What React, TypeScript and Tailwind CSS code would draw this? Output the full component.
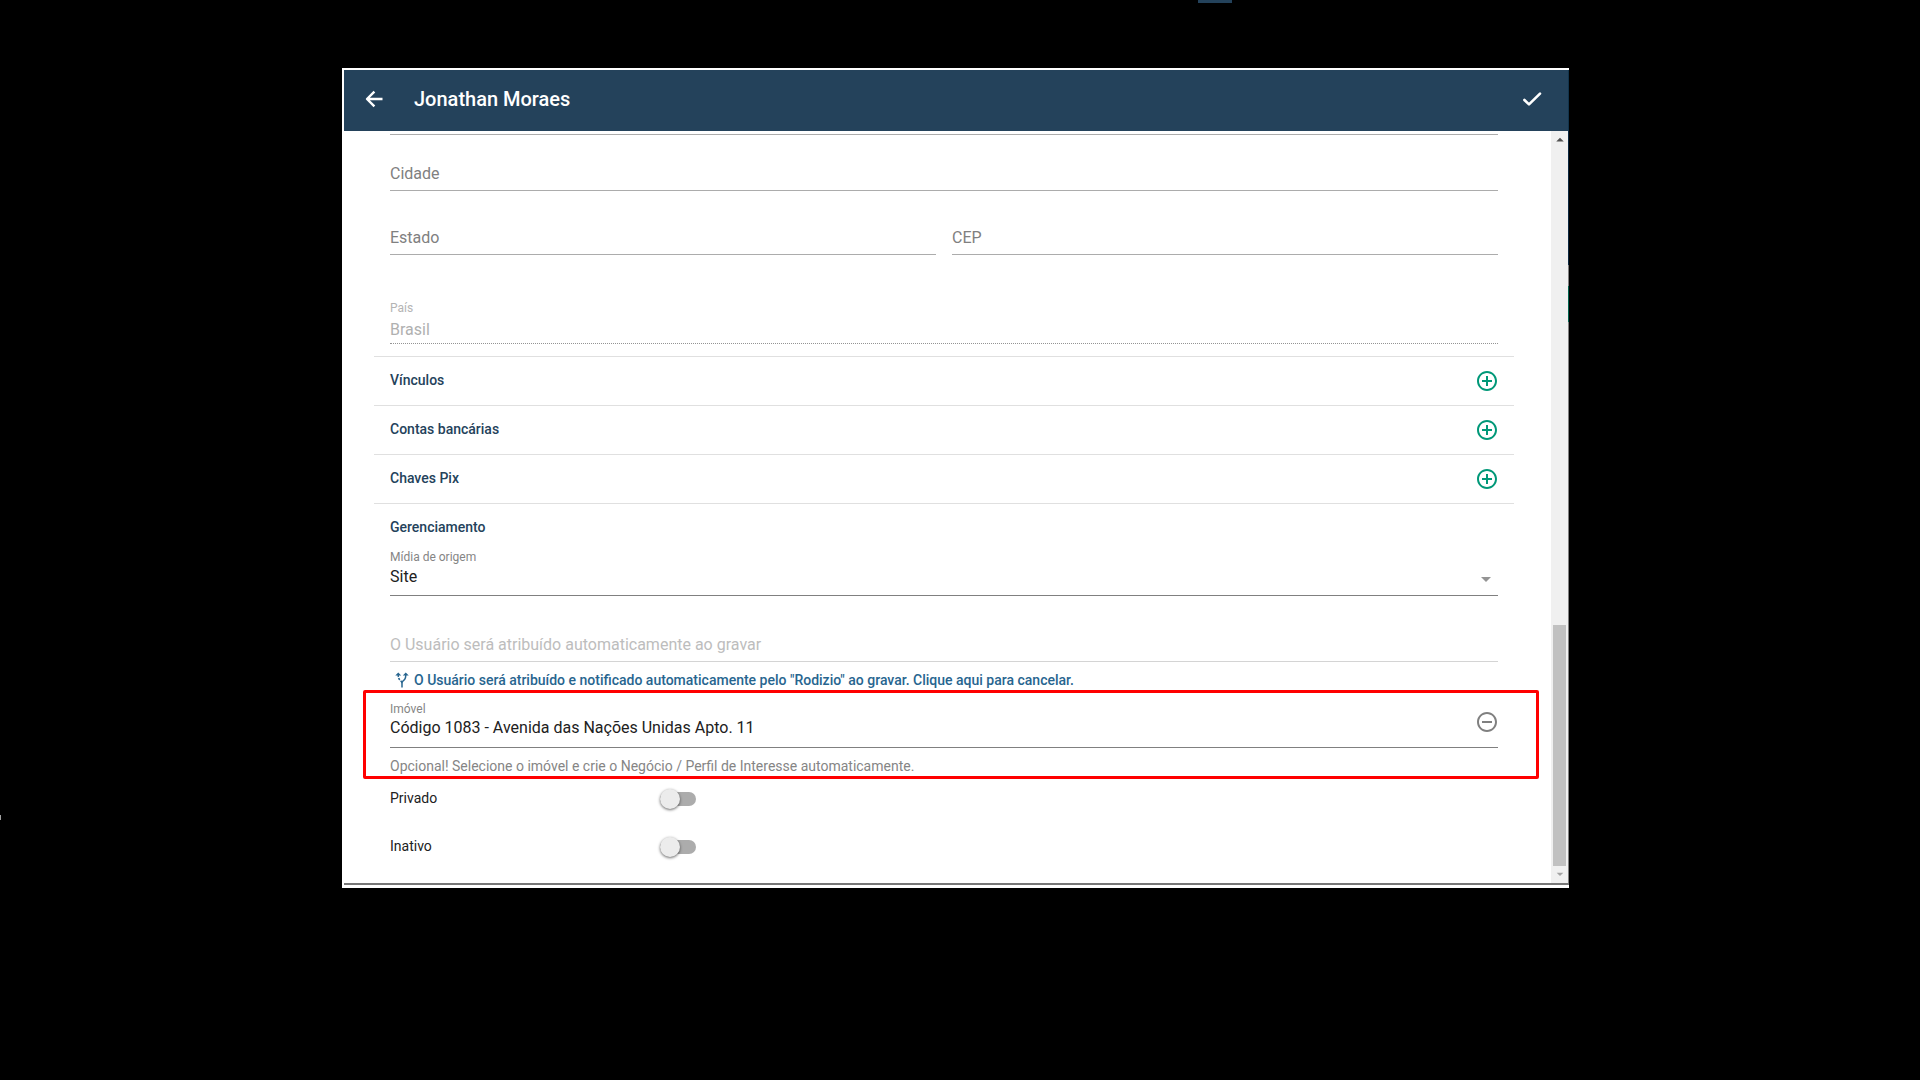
import { useState } from 'react';
import {
    MdAddCircleOutline,
    MdAltRoute,
    MdArrowDropDown,
    MdArrowDropUp,
    MdRemoveCircleOutline,
} from 'react-icons/md';

interface FieldProps {
    id: string;
    label: string;
}

function BackIcon() {
    return (
        <svg width="24" height="24" viewBox="0 0 24 24" fill="none" stroke="currentColor" strokeWidth="2.4" strokeLinejoin="round">
            <path d="M20.5 12H5M12.4 4.6 5 12l7.4 7.4" />
        </svg>
    );
}

function CheckIcon() {
    return (
        <svg width="24" height="24" viewBox="0 0 24 24" fill="none" stroke="currentColor" strokeWidth="2.6" strokeLinecap="round" strokeLinejoin="round">
            <path d="M4.4 13 9 17.4 20 6.6" />
        </svg>
    );
}

function TextField({ id, label }: FieldProps) {
    const [value, setValue] = useState('');

    return (
        <div className="relative h-14 flex-1 border-b border-[#acacac] pt-4">
            <input
                id={id}
                type="text"
                value={value}
                onChange={(e) => setValue(e.target.value)}
                className="block h-[39px] w-full bg-transparent text-base text-[#212121] outline-none"
            />
            <label
                htmlFor={id}
                className={
                    value
                        ? 'pointer-events-none absolute top-1 left-0 text-xs text-[#808080]'
                        : 'pointer-events-none absolute top-[27px] left-0 text-base text-[#808080]'
                }
            >
                {label}
            </label>
        </div>
    );
}

function ExpandableSection({ title }: { title: string }) {
    return (
        <div className="flex h-[49px] items-center justify-between border-t border-[#e0e0e0] pr-[15px] pl-4">
            <h2 className="pb-0.5 text-sm font-medium text-[#24425b]">{title}</h2>
            <button type="button" aria-label={`Adicionar ${title}`} className="text-[#009878]">
                <MdAddCircleOutline size={24} />
            </button>
        </div>
    );
}

function ToggleRow({ id, label }: FieldProps) {
    const [checked, setChecked] = useState(false);

    return (
        <div className="flex h-12 items-center px-4">
            <label htmlFor={id} className="w-[270px] pb-0.5 text-sm text-[#212121]">
                {label}
            </label>
            <span className="relative flex h-5 w-9 items-center">
                <input
                    id={id}
                    type="checkbox"
                    role="switch"
                    checked={checked}
                    onChange={(e) => setChecked(e.target.checked)}
                    className="peer h-[14px] w-9 cursor-pointer appearance-none rounded-full bg-[#acacac] checked:bg-[#80cbbb]"
                />
                <span className="pointer-events-none absolute top-0 left-0 size-5 rounded-full bg-[#ececec] shadow-[0_1px_3px_rgba(0,0,0,0.6)] peer-checked:left-4 peer-checked:bg-[#009878]" />
            </span>
        </div>
    );
}

function Scrollbar() {
    return (
        <div className="flex w-[18px] shrink-0">
            <div className="flex w-[17px] flex-col items-center bg-[#f0f0f0]">
                <span className="flex h-[18px] items-center text-[#505050]">
                    <MdArrowDropUp size={18} />
                </span>
                <span className="mt-auto h-[241px] w-[13px] bg-[#c1c1c1]" />
                <span className="flex h-[17px] items-start text-[#a3a3a3]">
                    <MdArrowDropDown size={16} />
                </span>
            </div>
            <div className="flex w-px flex-col">
                <span className="h-[134px] bg-[#0c2840]" />
                <span className="h-[21px] bg-[#808080]" />
                <span className="h-9 bg-[#00634e]" />
                <span className="flex-1 bg-[#808080]" />
            </div>
        </div>
    );
}

export default function App() {
    const [source, setSource] = useState('Site');
    const [property, setProperty] = useState('Código 1083 - Avenida das Nações Unidas Apto. 11');

    return (
        <div className="relative min-h-screen bg-black pt-[68px] pr-[351px] pb-12 pl-[342px] font-['Roboto',sans-serif]">
            {/* slivers of the page behind the overlay */}
            <span className="absolute top-0 left-[1198px] h-[3px] w-[34px] bg-[#24425b]" />
            <span className="absolute top-[815px] left-0 h-[5px] w-px bg-[#a0a0a0]" />

            <main className="border-t-2 border-l-2 border-white bg-white">
                <header className="flex h-[61px] items-center border-r border-[#12344c] bg-[#24425b] pb-[3px] text-white">
                    <button type="button" aria-label="Voltar" className="ml-[18px]">
                        <BackIcon />
                    </button>
                    <h1 className="ml-7 text-xl font-medium">Jonathan Moraes</h1>
                    <button type="submit" form="contact-form" aria-label="Salvar" className="mr-6 ml-auto">
                        <CheckIcon />
                    </button>
                </header>

                <div className="flex">
                    <form
                        id="contact-form"
                        onSubmit={(e) => e.preventDefault()}
                        className="min-w-0 flex-1 pr-[37px] pb-3 pl-[30px]"
                    >
                        <div className="px-4">
                            <div className="h-1 border-b border-[#acacac]" />
                            <div className="flex">
                                <TextField id="city" label="Cidade" />
                            </div>
                            <div className="mt-2 flex gap-4">
                                <TextField id="state" label="Estado" />
                                <TextField id="zip" label="CEP" />
                            </div>
                            <div className="mt-8 h-[57px] border-b border-dotted border-[#949494] pt-[13px]">
                                <label htmlFor="country" className="block text-xs text-[#b4b4b4]">
                                    País
                                </label>
                                <input
                                    id="country"
                                    type="text"
                                    value="Brasil"
                                    disabled
                                    className="block h-[26px] w-full bg-transparent text-base text-[#b0b0b0]"
                                />
                            </div>
                        </div>

                        <div className="mt-3">
                            <ExpandableSection title="Vínculos" />
                            <ExpandableSection title="Contas bancárias" />
                            <ExpandableSection title="Chaves Pix" />
                        </div>

                        <div className="border-t border-[#e0e0e0] px-4">
                            <h2 className="pt-[13px] text-sm font-medium text-[#24425b]">Gerenciamento</h2>
                            <div className="relative mt-3 h-[47px] border-b border-[#808080]">
                                <label htmlFor="source" className="block text-xs text-[#858585]">
                                    Mídia de origem
                                </label>
                                <select
                                    id="source"
                                    value={source}
                                    onChange={(e) => setSource(e.target.value)}
                                    className="block h-[22px] w-full appearance-none bg-transparent text-base text-[#212121] outline-none"
                                >
                                    <option>Site</option>
                                    <option>Indicação</option>
                                </select>
                                <MdArrowDropDown
                                    size={24}
                                    className="pointer-events-none absolute right-0 bottom-1 text-[#949494]"
                                />
                            </div>

                            <div className="mt-8 h-[34px] border-b border-[#d4d4d4]">
                                <input
                                    id="user"
                                    type="text"
                                    disabled
                                    aria-label="Usuário"
                                    placeholder="O Usuário será atribuído automaticamente ao gravar"
                                    className="block h-8 w-full bg-transparent text-base placeholder:text-[#bdbdbd]"
                                />
                            </div>
                            <button
                                type="button"
                                className="mt-2 ml-[3px] flex h-5 items-center gap-[3px] text-sm font-medium text-[#27658f]"
                            >
                                <MdAltRoute size={18} />
                                O Usuário será atribuído e notificado automaticamente pelo "Rodizio" ao gravar. Clique
                                aqui para cancelar.
                            </button>
                        </div>

                        {/* linked property */}
                        <div className="-mr-[25px] -ml-[11px] h-[89px] rounded-xs border-3 border-[#ff0000] pt-2 pr-[38px] pl-6">
                            <div className="flex h-[47px] border-b border-[#808080]">
                                <div className="flex-1">
                                    <label htmlFor="property" className="block text-xs text-[#858585]">
                                        Imóvel
                                    </label>
                                    <input
                                        id="property"
                                        type="text"
                                        value={property}
                                        onChange={(e) => setProperty(e.target.value)}
                                        className="block h-[22px] w-full bg-transparent text-base text-[#212121] outline-none"
                                    />
                                </div>
                                <button
                                    type="button"
                                    aria-label="Remover imóvel"
                                    onClick={() => setProperty('')}
                                    className="mt-[9px] -mr-px self-start text-[#808080]"
                                >
                                    <MdRemoveCircleOutline size={24} />
                                </button>
                            </div>
                            <p className="mt-2 text-sm text-[#858585]">
                                Opcional! Selecione o imóvel e crie o Negócio / Perfil de Interesse automaticamente.
                            </p>
                        </div>

                        <div className="-mt-1">
                            <ToggleRow id="private" label="Privado" />
                            <ToggleRow id="inactive" label="Inativo" />
                        </div>
                    </form>
                    <Scrollbar />
                </div>
                <div className="h-[5px] border-t-2 border-[#777777]" />
            </main>
        </div>
    );
}
